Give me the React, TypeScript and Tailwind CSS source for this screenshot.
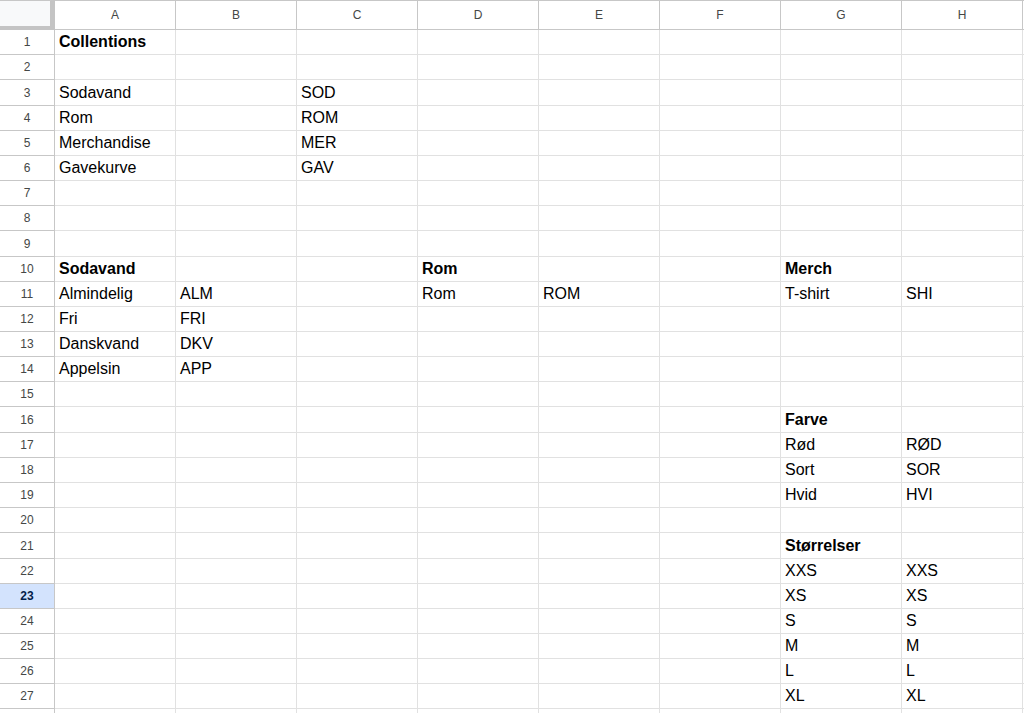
import React from "react";

type Cell = { t: string; b?: boolean };
const data: Record<number, Record<number, Cell>> = {
  1: { 0: { t: "Collentions", b: true } },
  3: { 0: { t: "Sodavand" }, 2: { t: "SOD" } },
  4: { 0: { t: "Rom" }, 2: { t: "ROM" } },
  5: { 0: { t: "Merchandise" }, 2: { t: "MER" } },
  6: { 0: { t: "Gavekurve" }, 2: { t: "GAV" } },
  10: { 0: { t: "Sodavand", b: true }, 3: { t: "Rom", b: true }, 6: { t: "Merch", b: true } },
  11: { 0: { t: "Almindelig" }, 1: { t: "ALM" }, 3: { t: "Rom" }, 4: { t: "ROM" }, 6: { t: "T-shirt" }, 7: { t: "SHI" } },
  12: { 0: { t: "Fri" }, 1: { t: "FRI" } },
  13: { 0: { t: "Danskvand" }, 1: { t: "DKV" } },
  14: { 0: { t: "Appelsin" }, 1: { t: "APP" } },
  16: { 6: { t: "Farve", b: true } },
  17: { 6: { t: "Rød" }, 7: { t: "RØD" } },
  18: { 6: { t: "Sort" }, 7: { t: "SOR" } },
  19: { 6: { t: "Hvid" }, 7: { t: "HVI" } },
  21: { 6: { t: "Størrelser", b: true } },
  22: { 6: { t: "XXS" }, 7: { t: "XXS" } },
  23: { 6: { t: "XS" }, 7: { t: "XS" } },
  24: { 6: { t: "S" }, 7: { t: "S" } },
  25: { 6: { t: "M" }, 7: { t: "M" } },
  26: { 6: { t: "L" }, 7: { t: "L" } },
  27: { 6: { t: "XL" }, 7: { t: "XL" } },
};

const tallRows = new Set([3, 9, 16, 21]);
const cols = ["A", "B", "C", "D", "E", "F", "G", "H"];

export default function App() {
  const rows = Array.from({ length: 28 }, (_, i) => i + 1);
  return (
    <div
      className="w-[1024px] h-[713px] overflow-hidden bg-white"
      style={{ fontFamily: '"Liberation Sans", Arial, sans-serif' }}
    >
      {/* header */}
      <div className="flex h-[30px]">
        <div className="w-[55px] h-[30px] shrink-0 bg-[#f8f9fa] border-t border-t-[#c7c7c7] border-r-[5px] border-r-[#c4c4c4] border-b-[4px] border-b-[#c4c4c4]" />
        {cols.map((c) => (
          <div
            key={c}
            className="w-[121px] h-[30px] shrink-0 flex items-center justify-center border-t border-t-[#c7c7c7] border-r border-r-[#c7c7c7] border-b border-b-[#c7c7c7] text-[12px] text-[#444746]"
          >
            {c}
          </div>
        ))}
        <div className="flex-1 border-t border-t-[#c7c7c7] border-b border-b-[#c7c7c7]" />
      </div>
      {rows.map((r) => {
        const h = tallRows.has(r) ? "h-[26px]" : "h-[25px]";
        const sel = r === 23;
        const last = r === 28;
        return (
          <div key={r} className={`flex ${h}`}>
            <div
              className={`w-[55px] shrink-0 flex items-center justify-center border-r border-r-[#c7c7c7] border-b border-b-[#c7c7c7] text-[12px] ${
                sel ? "bg-[#d3e3fd] text-[#041e49] font-bold" : "bg-white text-[#444746]"
              }`}
            >
              {last ? "" : r}
            </div>
            {cols.map((c, ci) => {
              const cell = data[r]?.[ci];
              return (
                <div
                  key={c}
                  className={`w-[121px] shrink-0 flex items-end pb-0 pl-[4px] border-r border-r-[#e1e1e1] border-b border-b-[#e1e1e1] text-[16px] text-black whitespace-nowrap ${
                    cell?.b ? "font-bold" : ""
                  }`}
                >
                  {cell?.t ?? ""}
                </div>
              );
            })}
            <div className="flex-1 border-b border-b-[#e1e1e1]" />
          </div>
        );
      })}
    </div>
  );
}
